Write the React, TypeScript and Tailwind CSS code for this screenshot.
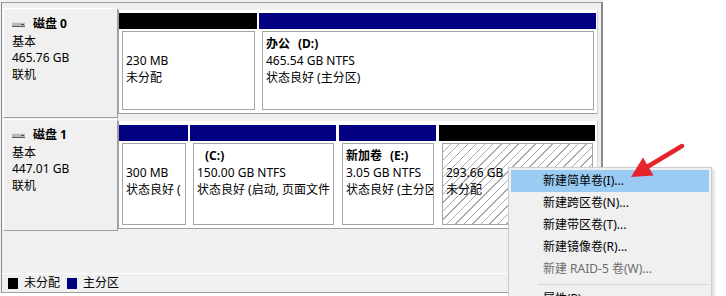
import React from 'react';

type Part = {
  w: string;
  bar: string;
  box: string;
  name?: string;
  letter?: string;
  size: string;
  status: string;
  hatched?: boolean;
};

const disk0: Part[] = [
  { w: 'w-[138px]', bar: 'bg-black', box: 'h-[79px]', size: '230 MB', status: '未分配' },
  { w: 'w-[337px] ml-[2px]', bar: 'bg-[#000080]', box: 'h-[79px]', name: '办公', letter: '(D:)', size: '465.54 GB NTFS', status: '状态良好 (主分区)' },
];

const disk1: Part[] = [
  { w: 'w-[69px]', bar: 'bg-[#000080]', box: 'h-[82px]', size: '300 MB', status: '状态良好 (' },
  { w: 'w-[146px] ml-[2px]', bar: 'bg-[#000080]', box: 'h-[82px]', name: '', letter: '(C:)', size: '150.00 GB NTFS', status: '状态良好 (启动, 页面文件' },
  { w: 'w-[97px] ml-[3px]', bar: 'bg-[#000080]', box: 'h-[82px]', name: '新加卷', letter: '(E:)', size: '3.05 GB NTFS', status: '状态良好 (主分区' },
  { w: 'w-[156px] ml-[3px]', bar: 'bg-black', box: 'h-[82px]', size: '293.66 GB', status: '未分配', hatched: true },
];

const menu = [
  { t: '新建简单卷(I)...', active: true },
  { t: '新建跨区卷(N)...' },
  { t: '新建带区卷(T)...' },
  { t: '新建镜像卷(R)...' },
  { t: '新建 RAID-5 卷(W)...', disabled: true },
  { sep: true, t: '' },
  { t: '属性(P)' },
];

function DiskIcon() {
  return (
    <svg width="14" height="7" viewBox="0 0 14 7" className="shrink-0">
      <rect x="0" y="1" width="13" height="5" fill="#b9b9b9" />
      <rect x="0" y="1" width="13" height="1" fill="#e2e2e2" />
      <rect x="0" y="5" width="13" height="1" fill="#5c5c5c" />
      <rect x="9" y="3" width="3" height="1" fill="#4a4a4a" />
    </svg>
  );
}

function Cell({ p }: { p: Part }) {
  return (
    <div className={`flex flex-col shrink-0 ${p.w}`}>
      <div className={`h-4 ${p.bar}`} />
      <div
        className={`mt-[2px] ml-[3px] mr-[2px] border border-[#a5a5a5] pl-[3px] pt-[3px] overflow-hidden whitespace-nowrap leading-[17px] ${p.box} ${
          p.hatched
            ? 'bg-[repeating-linear-gradient(135deg,#ffffff_0px,#ffffff_5px,#a8a8a8_5px,#a8a8a8_6px)]'
            : 'bg-white'
        }`}
      >
        <div className="h-[17px] font-bold">
          {p.letter !== undefined && (
            <>
              {p.name}
              <span className="ml-[8px]">{p.letter}</span>
            </>
          )}
        </div>
        <div>{p.size}</div>
        <div className="overflow-hidden">{p.status}</div>
      </div>
    </div>
  );
}

function DiskRow({ name, kind, size, parts, label, strip }: { name: string; kind: string; size: string; parts: Part[]; label: string; strip: string }) {
  return (
    <div className="flex items-start">
      <div className={`ml-[1px] w-[115px] shrink-0 bg-[#f0f0f0] border-t border-l border-white border-r border-b border-r-[#a0a0a0] border-b-[#a0a0a0] pl-[8px] pt-[6px] ${label}`}>
        <div className="h-[18px] flex items-center gap-[7px]">
          <DiskIcon />
          <span className="font-bold">{name}</span>
        </div>
        <div className="leading-[17px]">{kind}</div>
        <div className="leading-[16px]">{size}</div>
        <div className="leading-[17px]">联机</div>
      </div>
      <div className={`w-[480px] shrink-0 bg-white border-l border-b border-r border-l-[#a0a0a0] border-b-[#a0a0a0] border-r-[#d4d4d4] flex pb-[3px] ${strip}`}>
        {parts.map((p, i) => (
          <Cell key={i} p={p} />
        ))}
      </div>
    </div>
  );
}

export default function App() {
  return (
    <div className="relative w-[726px] h-[296px] bg-white overflow-hidden text-[12px] text-black [font-family:'Noto_Sans','Noto_Sans_CJK_SC',sans-serif]">
      <div className="w-[603px] h-[293px] pt-[2px] bg-[#f0f0f0]">
        <div className="ml-[1px] h-full border-t border-l border-r-2 border-t-[#9a9a9a] border-l-[#8c8c8c] border-r-[#8c8c8c] flex flex-col">
          <div className="mt-[5px]">
            <DiskRow name="磁盘 0" kind="基本" size="465.76 GB" parts={disk0} label="h-[110px]" strip="mt-[2px] pt-[3px]" />
          </div>
          <div className="mt-[1px]">
            <DiskRow name="磁盘 1" kind="基本" size="447.01 GB" parts={disk1} label="h-[112px]" strip="mt-[2px] pt-[4px]" />
          </div>
          <div className="mt-auto h-[20px] border-t border-b border-t-white border-b-[#a0a0a0] flex items-center pl-[6px] gap-[6px] leading-none">
            <span className="w-[10px] h-[11px] bg-black" />
            <span>未分配</span>
            <span className="ml-[1px] w-[10px] h-[11px] bg-[#000080]" />
            <span>主分区</span>
          </div>
        </div>
      </div>

      {/* context menu */}
      <div className="absolute left-[508px] top-[167px] w-[204px] bg-[#f0f0f0] border border-[#cccccc] shadow-[2px_2px_3px_rgba(0,0,0,0.15)] pt-[2px] px-[2px] pb-[4px]">
        {menu.map((m, i) =>
          m.sep ? (
            <div key={i} className="h-[8px] flex items-center pl-[27px]">
              <div className="w-full h-px bg-[#d7d7d7]" />
            </div>
          ) : (
            <div
              key={i}
              className={`h-[22px] flex items-center pl-[32px] ${m.active ? 'bg-[#99cbf3]' : ''} ${m.disabled ? 'text-[#6d6d6d]' : 'text-black'}`}
            >
              {m.t}
            </div>
          )
        )}
      </div>

      {/* red arrow */}
      <svg className="absolute left-[620px] top-[140px]" width="70" height="45" viewBox="0 0 70 45">
        <line x1="62" y1="6" x2="27" y2="27" stroke="#e5242b" strokeWidth="4.5" strokeLinecap="round" />
        <polygon points="11,37 23,17.5 33.5,35.5" fill="#e5242b" />
      </svg>
    </div>
  );
}
